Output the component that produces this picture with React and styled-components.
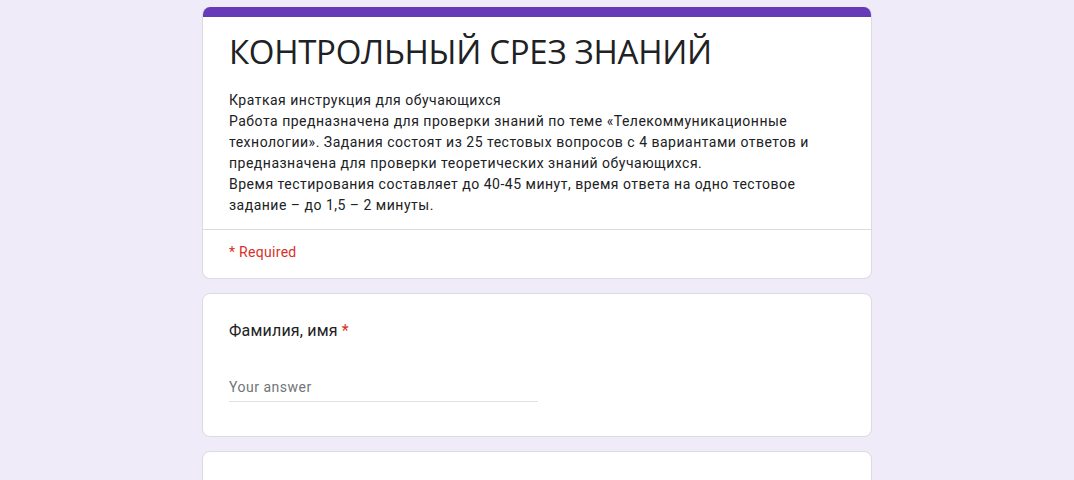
import React from "react";
import styled, { createGlobalStyle } from "styled-components";

const GlobalStyle = createGlobalStyle`
  body {
    margin: 0;
    background: #f0ebf8;
    font-family: Roboto, "Liberation Sans", Arial, sans-serif;
    color: #202124;
  }
`;

const Page = styled.main`
  width: 670px;
  margin: 0 auto;
  padding-top: 7px;
  display: flex;
  flex-direction: column;
  gap: 14px;
`;

const Card = styled.section`
  background: #fff;
  border: 1px solid #dadce0;
  border-radius: 8px;
  overflow: hidden;
  ${({ accent }) => accent && `border-top: none;`}
`;

const AccentBar = styled.div`
  height: 10px;
  background: #673ab7;
`;

const Header = styled.div`
  padding: 13px 24px 13px 26px;
  border-bottom: 1px solid #dadce0;
`;

const Title = styled.h1`
  margin: 0 0 16px;
  font-family: "Open Sans", Roboto, sans-serif;
  font-weight: 400;
  font-size: 33px;
  line-height: 44px;
  letter-spacing: -0.3px;
  color: #202124;
`;

const Description = styled.p`
  margin: 0;
  font-size: 14px;
  line-height: 21px;
  letter-spacing: 0.5px;
`;

const Required = styled.div`
  padding: 12px 26px 16px;
  font-size: 14px;
  line-height: 20px;
  color: #d93025;
  letter-spacing: 0.3px;
`;

const Question = styled.div`
  padding: 25px 24px 34px 26px;
`;

const Label = styled.div`
  font-size: 16px;
  line-height: 24px;
  letter-spacing: 0.2px;
  color: #202124;
`;

const Star = styled.span`
  color: #d93025;
  margin-left: 4px;
`;

const AnswerInput = styled.input`
  display: block;
  margin-top: 34px;
  width: 50%;
  padding: 0 0 4px;
  border: none;
  border-bottom: 1px solid #e0e0e0;
  outline: none;
  font-family: Roboto, sans-serif;
  font-size: 14px;
  line-height: 20px;
  letter-spacing: 0.5px;
  color: #202124;
  background: transparent;

  &::placeholder {
    color: #70757a;
  }
`;

const lines = [
  "Краткая инструкция для обучающихся",
  "Работа предназначена для проверки знаний по теме «Телекоммуникационные",
  "технологии». Задания состоят  из 25 тестовых вопросов с 4 вариантами ответов и",
  "предназначена для проверки теоретических знаний обучающихся.",
  "Время тестирования составляет до 40-45 минут, время ответа на одно тестовое",
  "задание – до 1,5 – 2 минуты.",
];

const QuestionCard = ({ label, required }) => (
  <Card>
    <Question>
      <Label>
        {label}
        {required && <Star>*</Star>}
      </Label>
      <AnswerInput placeholder="Your answer" />
    </Question>
  </Card>
);

export default function App() {
  return (
    <>
      <GlobalStyle />
      <Page>
        <Card accent>
          <AccentBar />
          <Header>
            <Title>КОНТРОЛЬНЫЙ СРЕЗ ЗНАНИЙ</Title>
            <Description>
              {lines.map((line, i) => (
                <React.Fragment key={i}>
                  {line}
                  {i < lines.length - 1 && <br />}
                </React.Fragment>
              ))}
            </Description>
          </Header>
          <Required>* Required</Required>
        </Card>
        <QuestionCard label="Фамилия, имя" required />
        <QuestionCard label="Группа" required />
      </Page>
    </>
  );
}
